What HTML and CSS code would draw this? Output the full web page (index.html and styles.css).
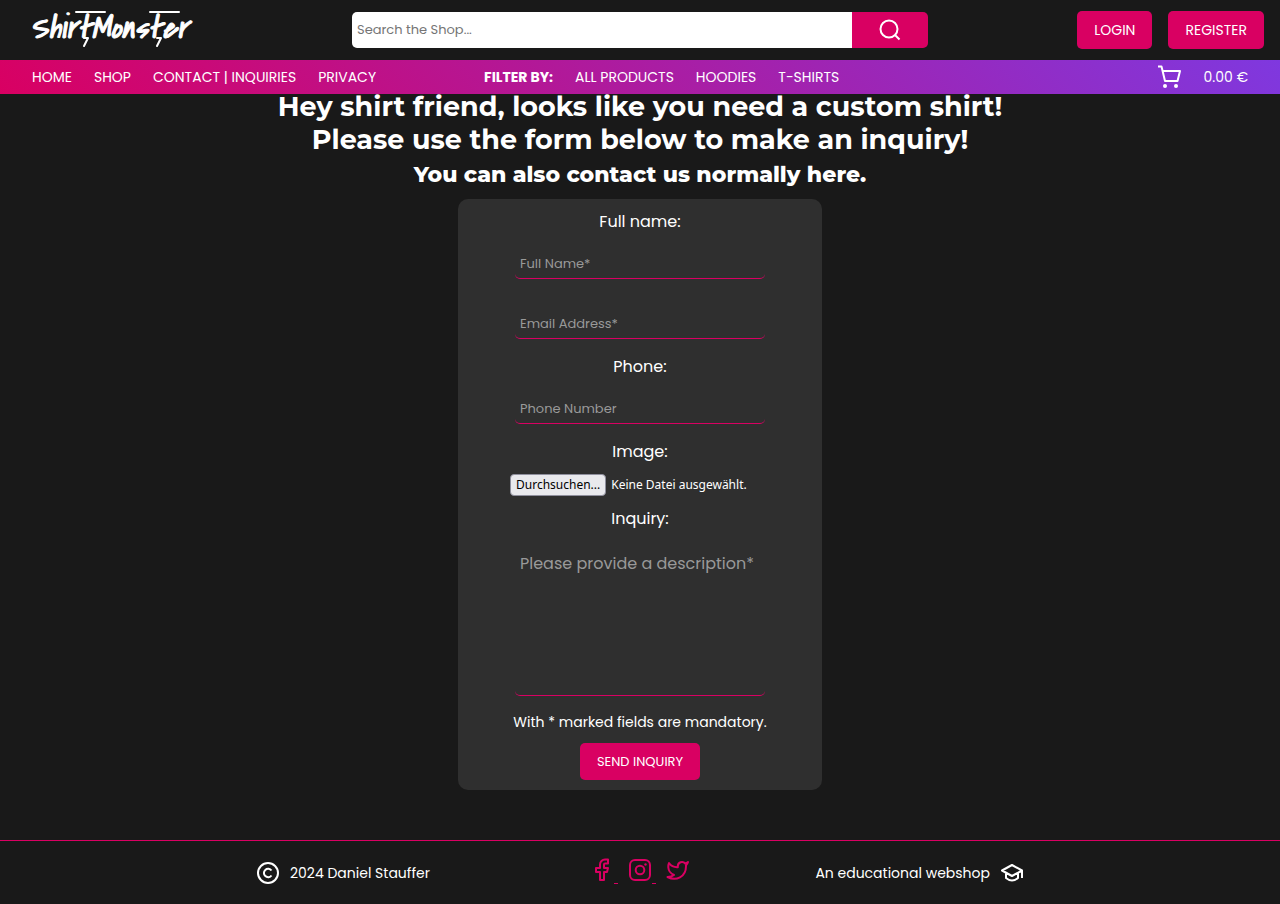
FILE: index.html
```html
<!DOCTYPE html>
<html lang="en">
<head>
<meta charset="utf-8">
<meta name="viewport" content="width=device-width, initial-scale=1">
<title>ShirtMonster</title>
<link rel="stylesheet" href="styles.css">
</head>
<body>
<header class="site-header">
  <div class="topbar">
    <a class="logo" href="#" aria-label="ShirtMonster">
      <svg width="172" height="48" viewBox="0 0 172 48">
        <text class="logo-text" x="2" y="36">ShirtMonster</text>
        <path d="M48 10H77M122 10H151M56 36H60L56 44M129 36H133L129 44" fill="none" stroke="#fff" stroke-width="2" stroke-linecap="round" stroke-linejoin="round"/>
      </svg>
    </a>
    <form class="search" role="search">
      <input class="search-input" type="search" aria-label="Search the shop" placeholder="Search the Shop...">
      <button class="search-button" type="button" aria-label="Search">
        <svg width="24" height="24" viewBox="0 0 24 24" fill="none" stroke="#fff" stroke-width="2"><circle cx="11" cy="11" r="8.500"/><path d="M17 17l4.500 4.500"/></svg>
      </button>
    </form>
    <div class="account">
      <button class="btn" type="button">LOGIN</button>
      <button class="btn" type="button">REGISTER</button>
    </div>
  </div>
  <nav class="navbar">
    <div class="nav-group">
      <a href="#">HOME</a><a href="#">SHOP</a><a href="#">CONTACT | INQUIRIES</a><a href="#">PRIVACY</a>
    </div>
    <div class="nav-group">
      <strong>FILTER BY:</strong><a href="#">ALL PRODUCTS</a><a href="#">HOODIES</a><a href="#">T-SHIRTS</a>
    </div>
    <a class="cart" href="#" aria-label="Cart, 0.00 €">
      <svg width="24" height="24" viewBox="0 0 24 24" fill="none" stroke="#fff" stroke-width="2" stroke-linejoin="round"><path d="M0 1.500h3.500L7 16h12.500L22 6H5"/><circle cx="7" cy="21" r="2" fill="#fff" stroke="none"/><circle cx="18" cy="21" r="2" fill="#fff" stroke="none"/></svg>
      <span>0.00 €</span>
    </a>
  </nav>
</header>

<main class="content">
  <h1 class="title">Hey shirt friend, looks like you need a custom shirt!<br>Please use the form below to make an inquiry!</h1>
  <h2 class="subtitle">You can also contact us normally <a href="#">here.</a></h2>
  <form class="inquiry">
    <label class="label" for="name">Full name:</label>
    <input class="field" id="name" type="text" placeholder="Full Name*">
    <input class="field" type="email" aria-label="Email address" placeholder="Email Address*">
    <label class="label" for="phone">Phone:</label>
    <input class="field" id="phone" type="tel" placeholder="Phone Number">
    <label class="label" for="image">Image:</label>
    <div class="file">
      <input class="file-input" id="image" type="file">
      <label class="file-button" for="image">Durchsuchen...</label>
      <span>Keine Datei ausgewählt.</span>
    </div>
    <label class="label" for="inquiry">Inquiry:</label>
    <textarea class="field field-area" id="inquiry" placeholder="Please provide a description*"></textarea>
    <p class="note">With * marked fields are mandatory.</p>
    <button class="btn btn-send" type="button">SEND INQUIRY</button>
  </form>
</main>

<footer class="site-footer">
  <div class="footer-row">
    <div class="footer-item">
      <svg width="24" height="24" viewBox="0 0 24 24" fill="none" stroke="#fff" stroke-width="2"><circle cx="12" cy="12" r="10"/><path d="M15.500 9.500a4.200 4.200 0 1 0 0 5"/></svg>
      <span>2024 Daniel Stauffer</span>
    </div>
    <div class="social">
      <a class="trail" href="#" aria-label="Facebook"><svg width="24" height="24" viewBox="0 0 24 24" fill="none" stroke="currentColor" stroke-width="2" stroke-linejoin="round"><path d="M18 1.500h-3a5 5 0 0 0-5 5V10H6v4h4v8h4v-8h3l1-4h-4V6.500a1 1 0 0 1 1-1h3z"/></svg></a>
      <a class="trail" href="#" aria-label="Instagram"><svg width="24" height="24" viewBox="0 0 24 24" fill="none" stroke="currentColor" stroke-width="2"><rect x="2" y="2" width="20" height="20" rx="5"/><circle cx="12" cy="12" r="4.300"/><circle cx="17.500" cy="6.500" r="1.200" fill="currentColor" stroke="none"/></svg></a>
      <a href="#" aria-label="Twitter"><svg width="24" height="24" viewBox="0 0 24 24" fill="none" stroke="currentColor" stroke-width="2" stroke-linejoin="round"><path d="M22 4a9 9 0 0 1-2.800 1.500 4.200 4.200 0 0 0-7.400 2.700v1A10 10 0 0 1 3 5s-3.500 8 5 12a11 11 0 0 1-6.500 2c8.500 4.500 18.500 0 18.500-10.800 0-.3 0-.5-.1-.8A7 7 0 0 0 22 4z"/></svg></a>
    </div>
    <div class="footer-item footer-end">
      <span>An educational webshop</span>
      <svg width="24" height="24" viewBox="0 0 24 24" fill="none" stroke="#fff" stroke-width="2" stroke-linejoin="round"><path d="M2 9.500L12 4l10 5.500-10 5.500zM6 12v5q6 5 12 0v-5M22 9.500V17"/></svg>
    </div>
  </div>
</footer>
</body>
</html>
```
FILE: styles.css
```css
:root {
  --pink: #d90062;
  --dark: #191919;
  --panel: #2f2f2f;
}

* { box-sizing: border-box; margin: 0; }

body {
  display: flex;
  flex-direction: column;
  min-height: 100vh;
  padding-top: 90px;
  background: var(--dark);
  color: #fff;
  font: 14px/22px Poppins, Inter, sans-serif;
}

a { color: inherit; text-decoration: none; }
svg { display: block; flex: none; }
button, input, textarea { font-family: inherit; }

.site-header { position: fixed; top: 0; left: 0; right: 0; z-index: 1; }

.topbar {
  display: grid;
  grid-template-columns: 1fr 576px 1fr;
  align-items: center;
  height: 60px;
  padding: 0 16px;
  background: var(--dark);
}
.logo { padding: 0 0 8px 12px; }
.logo-text {
  fill: #fff;
  stroke: #fff;
  font: italic 33px "Just Another Hand", "Covered By Your Grace", "Reenie Beanie", "Barlow Condensed", "Roboto Condensed", Caveat, cursive;
}

.search { display: flex; width: 100%; height: 36px; }
.search-input {
  flex: 1;
  min-width: 0;
  padding: 0 5px;
  border: 0;
  border-radius: 5px 0 0 5px;
  background: #fff;
  font-size: 13px;
  appearance: none;
}
.search-input::placeholder { color: #757575; }
.search-button {
  display: grid;
  place-items: center;
  width: 76px;
  padding: 0;
  border: 0;
  border-radius: 0 5px 5px 0;
  background: var(--pink);
}

.account { display: flex; justify-content: flex-end; gap: 16px; }

.btn {
  height: 38px;
  padding: 0 17px;
  border: 0;
  border-radius: 5px;
  background: var(--pink);
  color: #fff;
  font-size: 14px;
}
.btn-send { height: 37px; font-size: 13px; }

.navbar {
  display: grid;
  grid-template-columns: 452px 1fr auto;
  align-items: center;
  height: 34px;
  padding: 0 32px;
  background: linear-gradient(45deg, var(--pink), #7f38df);
}
.nav-group { display: flex; gap: 22px; white-space: nowrap; }
.cart { display: flex; align-items: center; gap: 22px; }

.content { display: flex; flex: 1; flex-direction: column; align-items: center; text-align: center; }
.title { font: 700 27px/33px Montserrat, Inter, sans-serif; }
.subtitle { margin: 6px 0 11px; font: 800 22px/26px Montserrat, Inter, sans-serif; }

.inquiry {
  display: flex;
  flex-direction: column;
  align-items: center;
  width: 364px;
  max-width: 100%;
  margin-bottom: 50px;
  padding: 10px;
  border-radius: 10px;
  background: var(--panel);
}
.label { font-size: 16px; line-height: 25px; }
.field {
  width: 250px;
  height: 30px;
  margin: 15px 0;
  padding: 0 5px;
  border: 0;
  border-bottom: 1px solid var(--pink);
  border-radius: 5px;
  background: transparent;
  color: #fff;
  font-size: 13px;
}
.field::placeholder { color: #999; }
.field-area { height: 150px; padding: 6px 5px; font-size: 16px; line-height: 24px; resize: none; }

.file {
  position: relative;
  display: flex;
  align-items: center;
  gap: 5px;
  width: 260px;
  margin: 10px 0;
  font: 12px/20px "Noto Sans", sans-serif;
}
.file-input { position: absolute; width: 1px; height: 1px; opacity: 0; }
.file-button {
  padding: 0 5px;
  border: 1px solid #8f8f9d;
  border-radius: 4px;
  background: #e9e9ed;
  color: #000;
}
.note { margin-bottom: 10px; }

.site-footer { border-top: 1px solid var(--pink); }
.footer-row {
  display: grid;
  grid-template-columns: 1fr 1fr 1fr;
  align-items: center;
  width: 60%;
  height: 63px;
  margin: 0 auto;
  white-space: nowrap;
}
.footer-item { display: flex; align-items: center; gap: 10px; }
.footer-end { justify-content: flex-end; }
.social { display: flex; justify-content: center; gap: 10px; padding-bottom: 6px; color: var(--pink); }
.trail { position: relative; margin-right: 4px; }
.trail::after {
  content: "";
  position: absolute;
  left: 100%;
  bottom: -2px;
  width: 4px;
  height: 1px;
  background: var(--pink);
}
```
